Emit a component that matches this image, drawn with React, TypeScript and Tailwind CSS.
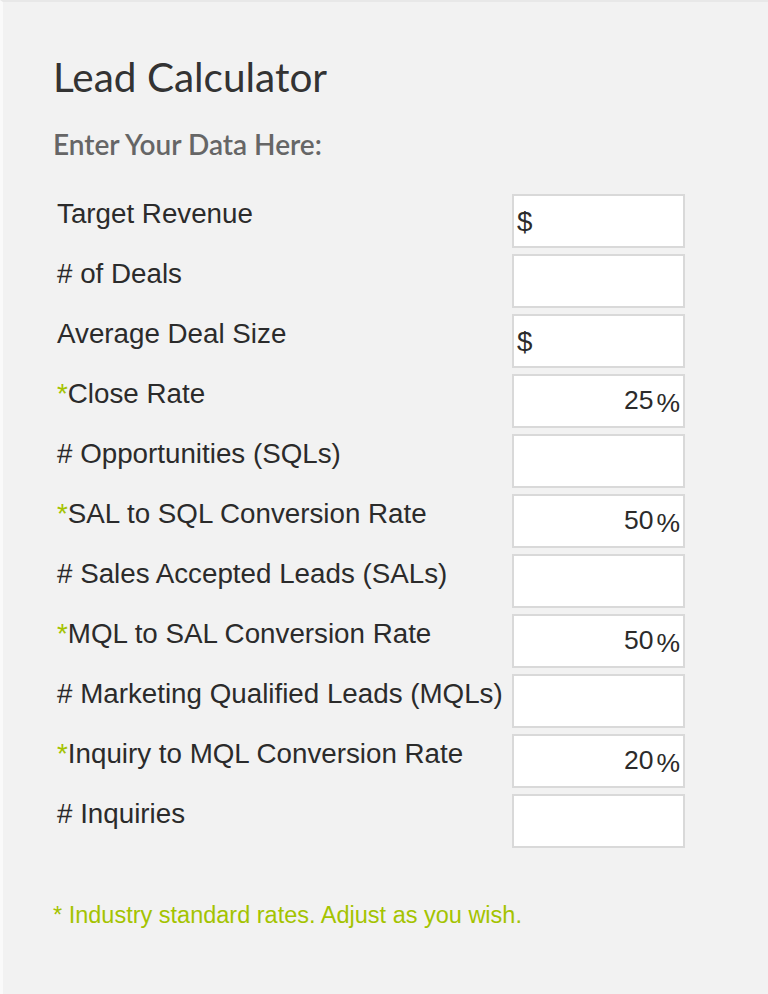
const ACCENT = 'text-[#a4c300]';

type Row = {
  label: string;
  starred?: boolean;
  prefix?: string;
  percent?: string;
};

const rows: Row[] = [
  { label: 'Target Revenue', prefix: '$' },
  { label: '# of Deals' },
  { label: 'Average Deal Size', prefix: '$' },
  { label: 'Close Rate', starred: true, percent: '25' },
  { label: '# Opportunities (SQLs)' },
  { label: 'SAL to SQL Conversion Rate', starred: true, percent: '50' },
  { label: '# Sales Accepted Leads (SALs)' },
  { label: 'MQL to SAL Conversion Rate', starred: true, percent: '50' },
  { label: '# Marketing Qualified Leads (MQLs)' },
  { label: 'Inquiry to MQL Conversion Rate', starred: true, percent: '20' },
  { label: '# Inquiries' },
];

function ValueBox({ row }: { row: Row }) {
  if (row.percent) {
    return (
      <div className="flex h-[54px] items-center justify-end border-2 border-[#d9d9d9] bg-white pr-[3px] text-[26.5px] text-[#2b2b2b]">
        <span>{row.percent}</span>
        <span className="ml-[3px] mt-[6px]">%</span>
      </div>
    );
  }
  return (
    <div className="flex h-[54px] items-center border-2 border-[#d9d9d9] bg-white pl-[3px] text-[27.75px] text-[#2b2b2b]">
      {row.prefix ? <span className="mt-[2px]">{row.prefix}</span> : null}
    </div>
  );
}

export default function App() {
  return (
    <div
      className="min-h-[994px] border-l-[3px] border-t-2 border-l-[#fafafa] border-t-[#e8e8e8] bg-[#f2f2f2] pl-[50px] pt-[51px]"
      style={{ fontFamily: '"Liberation Sans", Arial, sans-serif' }}
    >
      <h1 className="font-['Lato',sans-serif] text-[40.5px] leading-[1.2] text-[#333]">
        Lead Calculator
      </h1>
      <h2 className="mt-[26px] font-['Lato',sans-serif] text-[28px] font-semibold leading-[1.2] text-[#666]">
        Enter Your Data Here:
      </h2>

      <div className="mt-[33px] grid grid-cols-[459px_173px] gap-y-[6px]">
        {rows.map((row) => (
          <div key={row.label} className="contents">
            <div className="pl-[4px] pt-[4px] text-[27.75px] leading-[31px] whitespace-nowrap text-[#2b2b2b]">
              {row.starred ? <span className={ACCENT}>*</span> : null}
              {row.label}
            </div>
            <ValueBox row={row} />
          </div>
        ))}
      </div>

      <p className={`mt-[54px] text-[23.5px] leading-[27px] ${ACCENT}`}>
        * Industry standard rates. Adjust as you wish.
      </p>
    </div>
  );
}
